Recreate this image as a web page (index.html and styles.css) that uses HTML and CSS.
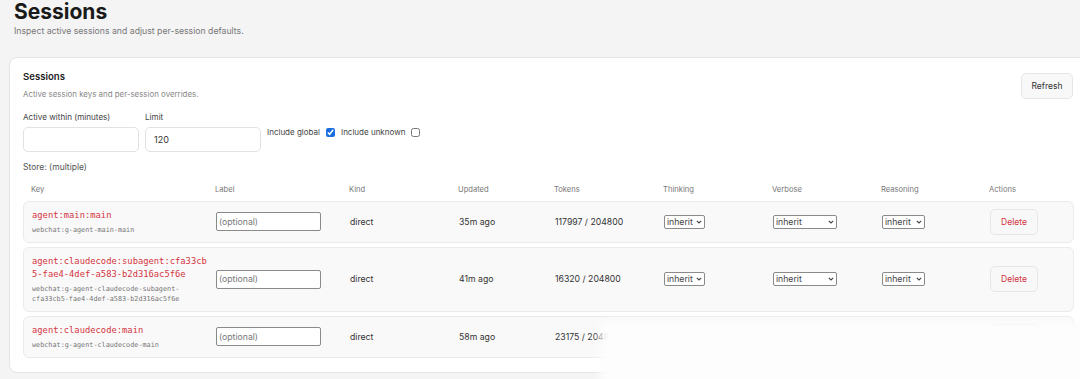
FILE: index.html
```html
<!DOCTYPE html>
<html lang="en">
<head>
    <meta charset="UTF-8">
    <meta name="viewport" content="width=device-width, initial-scale=1.0">
    <title>Sessions</title>
    <link rel="stylesheet" href="styles.css">
</head>
<body>
    <div class="page">
        <h1 class="page-title">Sessions</h1>
        <p class="page-sub">Inspect active sessions and adjust per-session defaults.</p>

        <div class="card">
            <div class="card-head">
                <div>
                    <h2 class="card-title">Sessions</h2>
                    <p class="card-sub">Active session keys and per-session overrides.</p>
                </div>
                <button class="btn">Refresh</button>
            </div>

            <div class="filters">
                <label class="field">
                    <span>Active within (minutes)</span>
                    <input type="text" value="">
                </label>
                <label class="field">
                    <span>Limit</span>
                    <input type="text" value="120">
                </label>
                <label class="check">Include global <input type="checkbox" checked></label>
                <label class="check">Include unknown <input type="checkbox"></label>
            </div>

            <p class="store">Store: (multiple)</p>

            <div class="table">
                <div class="thead">
                    <div>Key</div>
                    <div>Label</div>
                    <div>Kind</div>
                    <div>Updated</div>
                    <div>Tokens</div>
                    <div>Thinking</div>
                    <div>Verbose</div>
                    <div>Reasoning</div>
                    <div>Actions</div>
                </div>

                <div class="row">
                    <div>
                        <div class="key">agent:main:main</div>
                        <div class="key-sub">webchat:g-agent-main-main</div>
                    </div>
                    <div><input class="label-in" type="text" placeholder="(optional)"></div>
                    <div>direct</div>
                    <div>35m ago</div>
                    <div>117997 / 204800</div>
                    <div><span class="sel-wrap"><select class="sel sel-s"><option>inherit</option></select><svg viewBox="0 0 6 4"><path d="M0.8 0.8 L3 3 L5.2 0.8"/></svg></span></div>
                    <div><span class="sel-wrap"><select class="sel sel-l"><option>inherit</option></select><svg viewBox="0 0 6 4"><path d="M0.8 0.8 L3 3 L5.2 0.8"/></svg></span></div>
                    <div><span class="sel-wrap"><select class="sel sel-m"><option>inherit</option></select><svg viewBox="0 0 6 4"><path d="M0.8 0.8 L3 3 L5.2 0.8"/></svg></span></div>
                    <div><button class="btn btn-danger">Delete</button></div>
                </div>

                <div class="row">
                    <div>
                        <div class="key">agent:claudecode:subagent:cfa33cb5-fae4-4def-a583-b2d316ac5f6e</div>
                        <div class="key-sub">webchat:g-agent-claudecode-subagent-cfa33cb5-fae4-4def-a583-b2d316ac5f6e</div>
                    </div>
                    <div><input class="label-in" type="text" placeholder="(optional)"></div>
                    <div>direct</div>
                    <div>41m ago</div>
                    <div>16320 / 204800</div>
                    <div><span class="sel-wrap"><select class="sel sel-s"><option>inherit</option></select><svg viewBox="0 0 6 4"><path d="M0.8 0.8 L3 3 L5.2 0.8"/></svg></span></div>
                    <div><span class="sel-wrap"><select class="sel sel-l"><option>inherit</option></select><svg viewBox="0 0 6 4"><path d="M0.8 0.8 L3 3 L5.2 0.8"/></svg></span></div>
                    <div><span class="sel-wrap"><select class="sel sel-m"><option>inherit</option></select><svg viewBox="0 0 6 4"><path d="M0.8 0.8 L3 3 L5.2 0.8"/></svg></span></div>
                    <div><button class="btn btn-danger">Delete</button></div>
                </div>

                <div class="row">
                    <div>
                        <div class="key">agent:claudecode:main</div>
                        <div class="key-sub">webchat:g-agent-claudecode-main</div>
                    </div>
                    <div><input class="label-in" type="text" placeholder="(optional)"></div>
                    <div>direct</div>
                    <div>58m ago</div>
                    <div>23175 / 204800</div>
                    <div><span class="sel-wrap"><select class="sel sel-s"><option>inherit</option></select><svg viewBox="0 0 6 4"><path d="M0.8 0.8 L3 3 L5.2 0.8"/></svg></span></div>
                    <div><span class="sel-wrap"><select class="sel sel-l"><option>inherit</option></select><svg viewBox="0 0 6 4"><path d="M0.8 0.8 L3 3 L5.2 0.8"/></svg></span></div>
                    <div><span class="sel-wrap"><select class="sel sel-m"><option>inherit</option></select><svg viewBox="0 0 6 4"><path d="M0.8 0.8 L3 3 L5.2 0.8"/></svg></span></div>
                    <div><button class="btn btn-danger">Delete</button></div>
                </div>
            </div>
        </div>
    </div>
    <div class="fade"></div>
</body>
</html>
```

FILE: styles.css
```css
* {
    box-sizing: border-box;
    margin: 0;
    padding: 0;
}
body {
    background: #f4f4f4;
    font-family: Inter, "Noto Sans", sans-serif;
    color: #222;
    overflow: hidden;
    height: 379px;
}
.page {
    padding: 0 0 0 9px;
}
.page-title {
    font-size: 21px;
    font-weight: 700;
    line-height: 22px;
    margin: 1px 0 0 5px;
    color: #1a1a1a;
}
.page-sub {
    font-size: 8.7px;
    color: #777;
    margin: 2px 0 0 5px;
    line-height: 12px;
}
.card {
    margin-top: 20px;
    width: 1080px;
    height: 316px;
    background: #fff;
    border: 1px solid #e4e4e4;
    border-radius: 8px;
    padding: 12px 15px 0 13px;
}
.card-head {
    display: flex;
    justify-content: space-between;
    align-items: flex-start;
    height: 30px;
}
.card-title {
    font-size: 9.6px;
    font-weight: 600;
    line-height: 14px;
}
.card-sub {
    font-size: 7.9px;
    color: #888;
    margin-top: 5px;
    line-height: 11px;
}
.btn {
    font-family: inherit;
    font-size: 8.5px;
    color: #333;
    background: #f8f8f8;
    border: 1px solid #e6e6e6;
    border-radius: 5px;
    width: 52px;
    height: 26px;
    margin-top: 3px;
}
.btn-danger {
    color: #d4343f;
    width: 48px;
    margin-top: 0;
}
.filters {
    display: flex;
    align-items: flex-start;
    gap: 6px;
    margin-top: 11.5px;
}
.field {
    display: flex;
    flex-direction: column;
    font-size: 8.1px;
    color: #444;
    line-height: 11px;
}
.field input {
    margin-top: 4px;
    width: 116px;
    height: 25px;
    border: 1px solid #e2e2e2;
    border-radius: 5px;
    padding: 0 8px;
    font-family: inherit;
    font-size: 9px;
    color: #333;
}
.check {
    display: flex;
    align-items: center;
    gap: 6px;
    font-size: 8px;
    color: #444;
    height: 9px;
    margin-top: 16px;
}
.check input {
    width: 9px;
    height: 9px;
    margin: 0;
    accent-color: #1a6ee0;
}
.store {
    font-size: 8.5px;
    color: #555;
    margin-top: 10.5px;
    line-height: 11px;
}
.table {
    margin-top: 8.5px;
    width: 1051px;
}
.thead, .row {
    display: grid;
    grid-template-columns: 184px 134px 109px 96px 109px 109px 109px 108px 1fr;
    align-items: center;
    padding: 0 8px;
}
.thead {
    font-size: 7.6px;
    color: #777;
    height: 16px;
}
.row {
    background: #f9f9f9;
    border: 1px solid #ebebeb;
    border-radius: 6px;
    margin-top: 3px;
    padding-top: 7px;
    padding-bottom: 7px;
    font-size: 8.7px;
    color: #333;
    min-height: 40px;
}
.row + .row {
    margin-top: 4px;
}
.key {
    font-family: "DejaVu Sans Mono", monospace;
    font-size: 8.8px;
    line-height: 13px;
    color: #d4343f;
    word-break: break-all;
    padding-right: 6px;
}
.key-sub {
    font-family: "DejaVu Sans Mono", monospace;
    font-size: 6.8px;
    line-height: 10px;
    color: #777;
    margin-top: 3px;
    overflow-wrap: anywhere;
    padding-right: 10px;
}
.label-in {
    width: 105px;
    height: 19px;
    border: 1px solid #8a8a8a;
    border-radius: 2px;
    padding: 0 2px;
    font-family: inherit;
    font-size: 8.7px;
    background: #fff;
}
.label-in::placeholder {
    color: #777;
}
.sel-wrap {
    position: relative;
    display: inline-flex;
}
.sel-wrap svg {
    position: absolute;
    right: 3px;
    top: 5px;
    width: 6px;
    height: 4px;
    fill: none;
    stroke: #444;
    stroke-width: 1.1;
    pointer-events: none;
}
.sel {
    appearance: none;
    font-family: inherit;
    font-size: 8.7px;
    height: 14px;
    border: 1px solid #8a8a8a;
    border-radius: 2px;
    background: #fff;
    color: #444;
    padding: 0 0 0 2px;
}
.sel-s {
    width: 41px;
}
.sel-m {
    width: 43px;
}
.sel-l {
    width: 64px;
}
.fade {
    position: absolute;
    left: 600px;
    top: 322px;
    width: 520px;
    height: 70px;
    background: #fdfdfd;
    filter: blur(4px);
}
```
